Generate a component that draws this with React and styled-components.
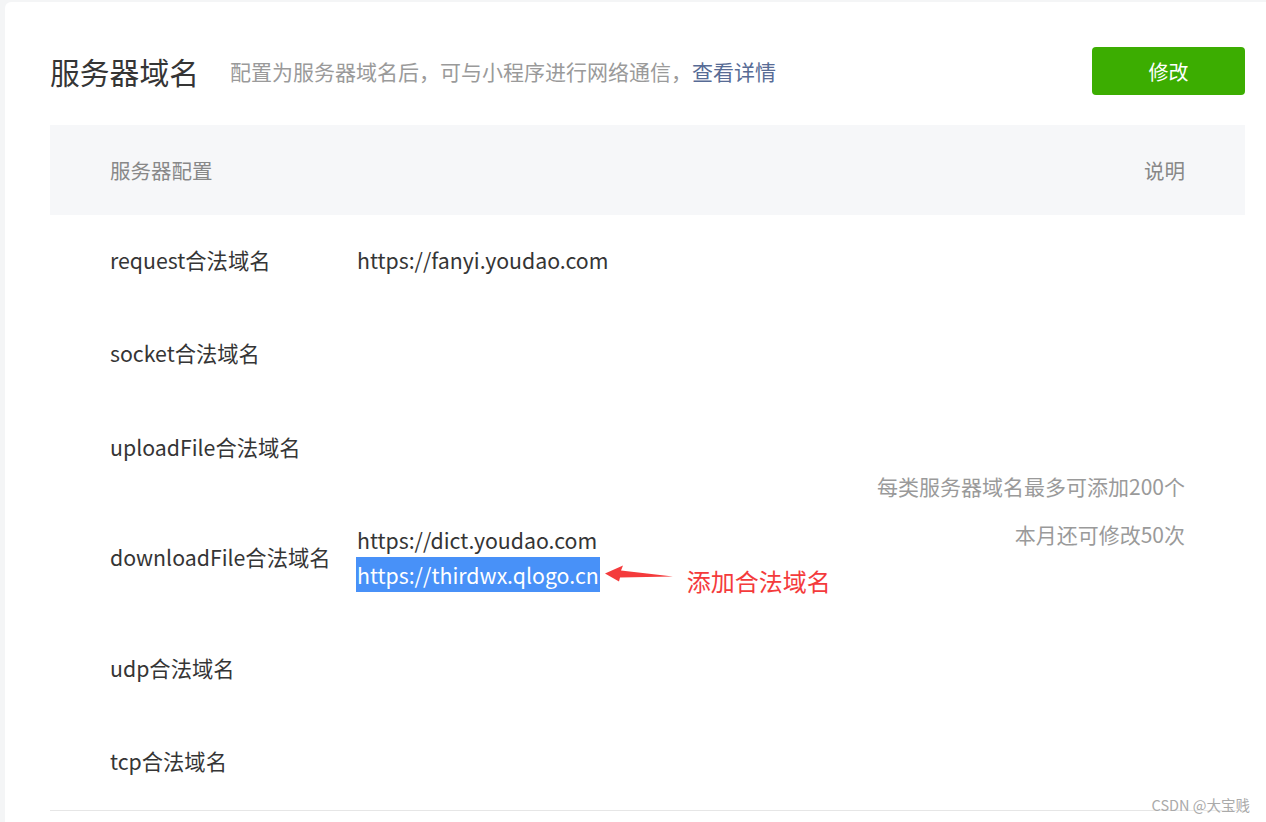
import React from "react";
import styled, { createGlobalStyle } from "styled-components";

const Global = createGlobalStyle`
  html, body { margin: 0; padding: 0; background: #f4f5f6; }
  body { font-family: "Noto Sans CJK SC", "Noto Sans", sans-serif; }
  #root { min-height: 100vh; }
`;

const Page = styled.div`
  position: relative;
  min-height: 100vh;
  box-sizing: border-box;
  padding: 2px 0 0 5px;
  display: flex;
  flex-direction: column;
`;

const Card = styled.div`
  flex: 1;
  background: #fff;
  border-radius: 6px 0 0 0;
  padding: 45px 21px 0 45px;
`;

const Header = styled.div`
  display: flex;
  align-items: center;
  height: 48px;
`;

const Title = styled.h2`
  margin: 0;
  font-size: 29.8px;
  font-weight: 400;
  color: #353535;
  line-height: 48px;
`;

const Sub = styled.span`
  margin-left: 31px;
  font-size: 21px;
  color: #9a9a9a;
  line-height: 48px;
  flex: 1;
`;

const Link = styled.a`
  color: #576b95;
  text-decoration: none;
`;

const Button = styled.button`
  width: 153px;
  height: 48px;
  border: none;
  border-radius: 4px;
  background: #3cad01;
  color: #fff;
  font-family: inherit;
  font-size: 20px;
`;

const Table = styled.table`
  margin-top: 30px;
  width: 100%;
  border-collapse: collapse;
  border-bottom: 1px solid #e6e6e6;
`;

const Th = styled.th`
  height: 90px;
  padding: 0 60px;
  background: #f6f7f9;
  font-size: 20.5px;
  font-weight: 400;
  color: #888;
  text-align: ${(p) => (p.$right ? "right" : "left")};
`;

const Td = styled.td`
  padding: 27px 0 31.3px;
  font-size: 21.3px;
  line-height: 35px;
  color: #353535;
  vertical-align: middle;
`;

const LabelTd = styled(Td)`
  width: 247px;
  padding-left: 60px;
`;

const DescTd = styled(Td)`
  text-align: right;
  padding: 29.25px 60px 35px 0;
  color: #9a9a9a;
  font-size: 21px;
`;

const DescLine = styled.div`
  line-height: 48px;
`;

const DomainLine = styled.div`
  display: flex;
  align-items: center;
  height: 35px;
  white-space: nowrap;
`;

const Selected = styled.span`
  background: #4891f8;
  color: #fff;
  height: 35px;
  line-height: 35px;
  padding: 0 1px;
  margin-left: -1px;
`;

const Arrow = styled.svg`
  flex: none;
  margin-left: 1px;
`;

const Note = styled.span`
  margin-left: 12px;
  margin-top: 14px;
  font-size: 24px;
  line-height: 30px;
  color: #f43b3c;
`;

const Watermark = styled.div`
  position: absolute;
  right: 16px;
  bottom: 7px;
  font-size: 14.5px;
  color: #aaa;
  text-shadow: 0 0 2px #fff;
`;

const rows = [
  { label: "request合法域名", domains: ["https://fanyi.youdao.com"] },
  { label: "socket合法域名", domains: [] },
  { label: "uploadFile合法域名", domains: [] },
  {
    label: "downloadFile合法域名",
    domains: ["https://dict.youdao.com"],
    added: "https://thirdwx.qlogo.cn",
  },
  { label: "udp合法域名", domains: [] },
  { label: "tcp合法域名", domains: [] },
];

export default function App() {
  return (
    <>
      <Global />
      <Page>
        <Card>
          <Header>
            <Title>服务器域名</Title>
            <Sub>
              配置为服务器域名后，可与小程序进行网络通信，<Link href="#">查看详情</Link>
            </Sub>
            <Button>修改</Button>
          </Header>
          <Table>
            <thead>
              <tr>
                <Th colSpan={2}>服务器配置</Th>
                <Th $right>说明</Th>
              </tr>
            </thead>
            <tbody>
              {rows.map((r, i) => (
                <tr key={r.label}>
                  <LabelTd>{r.label}</LabelTd>
                  <Td>
                    {r.domains.map((d) => (
                      <DomainLine key={d}>{d}</DomainLine>
                    ))}
                    {r.added && (
                      <DomainLine>
                        <Selected>{r.added}</Selected>
                        <Arrow width="74" height="35" viewBox="0 0 74 35">
                          <polygon
                            points="4,16.5 22,8.5 20,13.5 72,19.5 19,20.5 18,24.5"
                            fill="#f43b3c"
                          />
                        </Arrow>
                        <Note>添加合法域名</Note>
                      </DomainLine>
                    )}
                  </Td>
                  {i === 0 && (
                    <DescTd rowSpan={rows.length}>
                      <DescLine>每类服务器域名最多可添加200个</DescLine>
                      <DescLine>本月还可修改50次</DescLine>
                    </DescTd>
                  )}
                </tr>
              ))}
            </tbody>
          </Table>
        </Card>
        <Watermark>CSDN @大宝贱</Watermark>
      </Page>
    </>
  );
}
